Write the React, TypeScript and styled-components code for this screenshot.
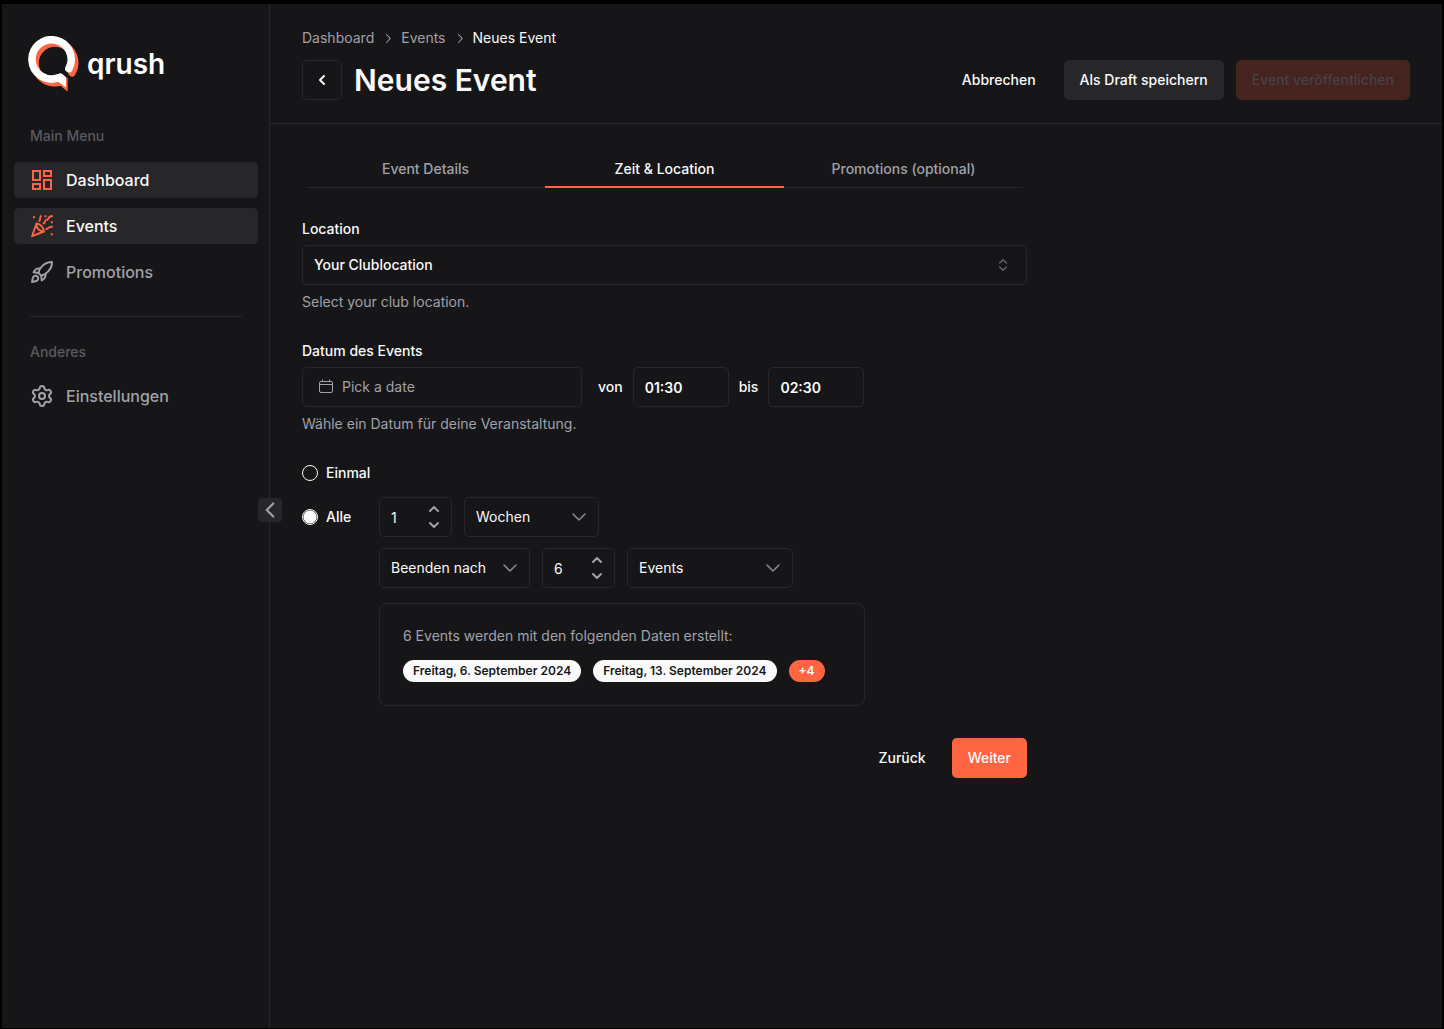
import React from "react";
import styled, { createGlobalStyle } from "styled-components";
import { Settings, ChevronLeft, ChevronDown, ChevronUp, ChevronsUpDown } from "lucide-react";
import { RxChevronRight } from "react-icons/rx";

const c = {
  bg: "#161618",
  raised: "#27272a",
  line: "#27272a",
  text: "#fafafa",
  muted: "#a1a1aa",
  faint: "#5a5a61",
  accent: "#ff6542",
};

const Global = createGlobalStyle`
  *, *::before, *::after { box-sizing: border-box; }
  body { margin: 0; background: #000; color: ${c.text}; font: 400 14px/20px Inter, "Liberation Sans", sans-serif; }
  button, input, select { font: inherit; color: inherit; margin: 0; }
  button { cursor: pointer; }
  a { color: inherit; text-decoration: none; }
  svg { flex: none; display: block; }
`;

const Frame = styled.div`
  display: grid;
  grid-template-columns: 268px 1fr;
  min-height: 100vh;
  border: solid #000;
  border-width: 4px 2px 1px;
  background: ${c.bg};
`;

const Sidebar = styled.aside`
  position: relative;
  border-right: 1px solid ${c.line};
  padding: 32px 11px 0 12px;
`;

const Brand = styled.a`
  display: flex;
  align-items: center;
  gap: 8px;
  height: 56px;
  margin-bottom: 4px;
  padding-left: 14px;
  font-size: 28px;
  line-height: 36px;
  font-weight: 600;
  color: #fff;
`;

const MenuTitle = styled.h2`
  margin: 0;
  padding: 30px 16px 16px;
  font-size: 14px;
  line-height: 20px;
  font-weight: 500;
  color: ${c.faint};
`;

const Menu = styled.nav`
  display: grid;
  gap: 10px;
`;

const MenuLink = styled.a<{ $active?: boolean }>`
  display: flex;
  align-items: center;
  gap: 12px;
  height: 36px;
  padding: 0 16px;
  border-radius: 5px;
  font-size: 16px;
  line-height: 24px;
  font-weight: 500;
  color: ${(p) => (p.$active ? c.text : c.muted)};
  background: ${(p) => (p.$active ? c.raised : "transparent")};
  svg { color: ${(p) => (p.$active ? c.accent : c.muted)}; }
`;

const Divider = styled.hr`
  margin: 26px 16px -5px;
  border: 0;
  border-top: 1px solid ${c.line};
`;

const Collapse = styled.button`
  position: absolute;
  right: -13px;
  top: 494px;
  display: flex;
  align-items: center;
  justify-content: center;
  width: 24px;
  height: 24px;
  padding: 0;
  border: 0;
  border-radius: 4px;
  background: ${c.raised};
  color: ${c.muted};
`;

const Header = styled.header`
  display: flex;
  align-items: flex-end;
  justify-content: space-between;
  height: 120px;
  padding: 0 32px 23px;
  border-bottom: 1px solid ${c.line};
`;

const Crumbs = styled.nav`
  display: flex;
  align-items: center;
  gap: 6px;
  margin-bottom: 12px;
  color: ${c.muted};
  [aria-current] { color: ${c.text}; }
`;

const TitleRow = styled.div`
  display: flex;
  align-items: center;
  gap: 12px;
`;

const Title = styled.h1`
  margin: 0;
  font-size: 30px;
  line-height: 36px;
  font-weight: 600;
`;

const Actions = styled.div<{ $end?: boolean }>`
  display: flex;
  justify-content: flex-end;
  gap: ${(p) => (p.$end ? "10px" : "12px")};
  margin-top: ${(p) => (p.$end ? "32px" : "0")};
`;

const Button = styled.button<{ $kind?: "ghost" | "raised" | "accent" }>`
  height: 40px;
  padding: 0 16px;
  border: 0;
  border-radius: 5px;
  font-weight: 500;
  white-space: nowrap;
  background: ${(p) => (p.$kind === "accent" ? c.accent : p.$kind === "raised" ? c.raised : "transparent")};
  &:disabled { background: #45241f; color: #474143; }
`;

const IconButton = styled.button`
  display: grid;
  place-items: center;
  width: 40px;
  height: 40px;
  padding: 0;
  border: 1px solid ${c.line};
  border-radius: 5px;
  background: transparent;
`;

const Form = styled.form`
  max-width: 789px;
  padding: 26px 32px;
`;

const Tabs = styled.div`
  display: grid;
  grid-template-columns: repeat(3, 1fr);
  margin: 0 4px 31px;
`;

const Tab = styled.button<{ $active?: boolean }>`
  height: 38px;
  padding: ${(p) => (p.$active ? "1px 0 0" : "0")};
  border: 0;
  border-bottom: ${(p) => (p.$active ? `2px solid ${c.accent}` : `1px solid ${c.line}`)};
  background: transparent;
  font-weight: 500;
  color: ${(p) => (p.$active ? c.text : c.muted)};
`;

const Field = styled.div`
  margin-bottom: 29px;
`;

const Label = styled.label`
  display: block;
  margin-bottom: 6px;
  font-weight: 500;
`;

const Hint = styled.p`
  margin: 7px 0 0;
  color: ${c.muted};
`;

const Row = styled.div<{ $gap: number }>`
  display: flex;
  align-items: center;
  gap: ${(p) => p.$gap}px;
`;

const Control = styled.div<{ $w?: number; $wide?: boolean }>`
  display: grid;
  grid-template-columns: minmax(0, 1fr);
  align-items: center;
  width: ${(p) => (p.$w ? `${p.$w}px` : "100%")};
  height: 40px;
  border: 1px solid ${c.line};
  border-radius: 5px;
  > * { grid-area: 1 / 1; }
  > svg {
    justify-self: end;
    margin-right: ${(p) => (p.$wide ? "15px" : "7px")};
    pointer-events: none;
    color: ${(p) => (p.$wide ? "#68686d" : "#8b8b91")};
  }
`;

const Select = styled.select<{ $strong?: boolean }>`
  appearance: none;
  width: 100%;
  height: 38px;
  padding: 0 11px;
  border: 0;
  background: transparent;
  font-weight: ${(p) => (p.$strong ? 500 : 400)};
`;

const Input = styled.input<{ $strong?: boolean }>`
  appearance: textfield;
  width: 100%;
  height: 38px;
  padding: 0 11px;
  border: 0;
  background: transparent;
  font-weight: ${(p) => (p.$strong ? 600 : 400)};
  &::-webkit-inner-spin-button { display: none; }
`;

const DateButton = styled.button`
  display: flex;
  align-items: center;
  gap: 8px;
  width: 280px;
  height: 40px;
  padding: 0 15px;
  border: 1px solid ${c.line};
  border-radius: 5px;
  background: transparent;
  color: ${c.muted};
`;

const Small = styled.label`
  font-weight: 500;
`;

const TimeRow = styled(Row)`
  ${DateButton} { margin-right: 6px; }
`;

const Steps = styled.div`
  display: grid;
  justify-self: end;
  margin-right: 9px;
  button {
    display: grid;
    place-items: center;
    width: 16px;
    height: 16px;
    padding: 0;
    border: 0;
    background: transparent;
    color: ${c.muted};
  }
`;

const Repeat = styled.div`
  display: grid;
  grid-template-columns: 65px 1fr;
  column-gap: 12px;
  row-gap: 11px;
`;

const RadioRow = styled.label`
  display: flex;
  align-items: center;
  gap: 8px;
  font-weight: 500;
`;

const Once = styled(RadioRow)`
  grid-column: 1 / -1;
  height: 20px;
  margin-bottom: 3px;
`;

const Radio = styled.input`
  appearance: none;
  flex: none;
  width: 16px;
  height: 16px;
  margin: 0;
  border: 1px solid ${c.text};
  border-radius: 50%;
  &:checked { background: radial-gradient(circle, ${c.text} 6px, transparent 7px); }
`;

const Second = styled.div`
  grid-column: 2;
`;

const Summary = styled.section`
  max-width: 486px;
  margin-top: 15px;
  padding: 22px 23px 23px;
  border: 1px solid ${c.line};
  border-radius: 8px;
  p { margin: 0 0 14px; color: ${c.muted}; }
`;

const Pill = styled.span<{ $accent?: boolean }>`
  padding: 3px 10px;
  border-radius: 11px;
  font-size: 12px;
  line-height: 16px;
  font-weight: 600;
  white-space: nowrap;
  color: ${(p) => (p.$accent ? c.text : "#18181b")};
  background: ${(p) => (p.$accent ? c.accent : c.text)};
`;

const Logo = () => (
  <svg width="51" height="56" viewBox="0 0 51 56" fill="none" aria-hidden="true">
    <path d="M44 36.800A19.800 19.800 0 1 0 33 45.700" stroke={c.accent} strokeWidth="7.600" strokeLinecap="round" />
    <path d="M33 42 39.700 41.500V54.500Q39.700 55.600 38.800 54.900L30 47.500z" fill={c.accent} />
    <path d="M40.900 32.600A19.600 19.600 0 1 0 30 41.900" stroke="#fff" strokeWidth="7.600" strokeLinecap="round" />
    <path d="M29 38.500 32 37.300Q33 37 34 37.800L38 41V50.500Q38 51.500 37 50.800L30 45.500z" fill="#fff" />
  </svg>
);

const DashboardIcon = () => (
  <svg width="24" height="24" viewBox="0 0 24 24" fill="none" stroke="currentColor" strokeWidth="2" aria-hidden="true">
    <path d="M3 3h7v9H3zM14 3h7v5h-7zM14 12h7v9h-7zM3 16h7v5H3z" />
  </svg>
);

const PartyIcon = () => (
  <svg width="24" height="24" viewBox="0 0 24 24" fill="none" stroke="currentColor" strokeWidth="1.900" strokeLinejoin="round" aria-hidden="true">
    <path d="M6.500 9.500 2 22.200 14 17.500C13.500 13.500 10.500 10 6.500 9.500ZM6.500 9.700C5.800 13.500 9 17.300 13.500 17.500" />
    <path d="M8.500 7.200C11.800 6.500 8.500 3.800 11.500 1.500M12.700 9.500C16.500 9.500 13.300 6.400 16.800 5.900C19.500 5.500 17 2.200 22.800 2M15.500 15.200C18.800 15.500 17.500 11.900 22.800 12.800" />
    <path d="M3 3.200h2M14.500 2.200h2M20.800 8.200h2M20.800 20.300h2" strokeWidth="2" />
  </svg>
);

const RocketIcon = () => (
  <svg width="24" height="24" viewBox="0 0 24 24" fill="none" stroke="currentColor" strokeWidth="1.900" strokeLinejoin="round" strokeLinecap="round" aria-hidden="true">
    <path d="M22 2C16.500 1.800 12.700 4.500 9.500 9.400L8.500 13l2.700 2.700L14.600 14.500C19.500 11.200 22.200 7.500 22 2Z" />
    <path d="M10 8.500C6.500 7.800 5 9.500 3.500 12.300L8.500 13M15.500 14C16.200 17.500 14.500 19 11.700 20.500L11.200 15.700" />
    <path d="M7.500 16.500C5.500 14.700 3.200 16.200 2.700 18.500L2 22l3.500-.7C7.800 20.800 9.300 18.500 7.500 16.500Z" />
  </svg>
);

const CalendarIcon = () => (
  <svg width="16" height="16" viewBox="0 0 16 16" fill="none" stroke="currentColor" aria-hidden="true">
    <rect x="1.500" y="2.500" width="13" height="11" rx="1.500" />
    <path d="M1.500 5.500h13M4.500 0.500v2M11.500 0.500v2" />
  </svg>
);

function NumberBox({ id, label, value }: { id: string; label: string; value: number }) {
  const [n, setN] = React.useState(value);
  return (
    <Control $w={73}>
      <Input id={id} aria-label={label} type="number" value={n} onChange={(e) => setN(Number(e.target.value))} />
      <Steps>
        <button type="button" aria-label="Erhöhen" onClick={() => setN(n + 1)}><ChevronUp size={16} strokeWidth={3} /></button>
        <button type="button" aria-label="Verringern" onClick={() => setN(Math.max(1, n - 1))}><ChevronDown size={16} strokeWidth={3} /></button>
      </Steps>
    </Control>
  );
}

function Choice({ label, value, width }: { label: string; value: string; width: number }) {
  return (
    <Control $w={width}>
      <Select aria-label={label}><option>{value}</option></Select>
      <ChevronDown size={24} strokeWidth={1.500} />
    </Control>
  );
}

export default function App() {
  return (
    <>
      <Global />
      <Frame>
        <Sidebar>
          <Brand href="#"><Logo />qrush</Brand>
          <MenuTitle>Main Menu</MenuTitle>
          <Menu>
            <MenuLink href="#" $active><DashboardIcon />Dashboard</MenuLink>
            <MenuLink href="#" $active><PartyIcon />Events</MenuLink>
            <MenuLink href="#"><RocketIcon />Promotions</MenuLink>
          </Menu>
          <Divider />
          <MenuTitle>Anderes</MenuTitle>
          <Menu>
            <MenuLink href="#"><Settings size={24} strokeWidth={2} />Einstellungen</MenuLink>
          </Menu>
          <Collapse aria-label="Menü einklappen"><ChevronLeft size={26} strokeWidth={2} /></Collapse>
        </Sidebar>
        <main>
          <Header>
            <div>
              <Crumbs aria-label="Breadcrumb">
                <a href="#">Dashboard</a>
                <RxChevronRight size={15} />
                <a href="#">Events</a>
                <RxChevronRight size={15} />
                <span aria-current="page">Neues Event</span>
              </Crumbs>
              <TitleRow>
                <IconButton aria-label="Zurück"><ChevronLeft size={16} strokeWidth={3} /></IconButton>
                <Title>Neues Event</Title>
              </TitleRow>
            </div>
            <Actions>
              <Button>Abbrechen</Button>
              <Button $kind="raised">Als Draft speichern</Button>
              <Button $kind="accent" disabled>Event veröffentlichen</Button>
            </Actions>
          </Header>
          <Form onSubmit={(e) => e.preventDefault()}>
            <Tabs role="tablist">
              <Tab type="button" role="tab">Event Details</Tab>
              <Tab type="button" role="tab" aria-selected $active>Zeit &amp; Location</Tab>
              <Tab type="button" role="tab">Promotions (optional)</Tab>
            </Tabs>
            <Field>
              <Label htmlFor="location">Location</Label>
              <Control $wide>
                <Select id="location" $strong><option>Your Clublocation</option></Select>
                <ChevronsUpDown size={16} strokeWidth={2} />
              </Control>
              <Hint>Select your club location.</Hint>
            </Field>
            <Field>
              <Label htmlFor="date">Datum des Events</Label>
              <TimeRow $gap={10}>
                <DateButton id="date" type="button"><CalendarIcon />Pick a date</DateButton>
                <Small htmlFor="from">von</Small>
                <Control $w={96}><Input id="from" $strong defaultValue="01:30" /></Control>
                <Small htmlFor="to">bis</Small>
                <Control $w={96}><Input id="to" $strong defaultValue="02:30" /></Control>
              </TimeRow>
              <Hint>Wähle ein Datum für deine Veranstaltung.</Hint>
            </Field>
            <Repeat>
              <Once><Radio type="radio" name="repeat" />Einmal</Once>
              <RadioRow><Radio type="radio" name="repeat" defaultChecked />Alle</RadioRow>
              <Row $gap={12}>
                <NumberBox id="every" label="Intervall" value={1} />
                <Choice label="Einheit" value="Wochen" width={135} />
              </Row>
              <Second>
                <Row $gap={12}>
                  <Choice label="Ende" value="Beenden nach" width={151} />
                  <NumberBox id="count" label="Anzahl" value={6} />
                  <Choice label="Endeinheit" value="Events" width={166} />
                </Row>
                <Summary>
                  <p>6 Events werden mit den folgenden Daten erstellt:</p>
                  <Row $gap={12}>
                    <Pill>Freitag, 6. September 2024</Pill>
                    <Pill>Freitag, 13. September 2024</Pill>
                    <Pill $accent>+4</Pill>
                  </Row>
                </Summary>
              </Second>
            </Repeat>
            <Actions $end>
              <Button type="button">Zurück</Button>
              <Button type="submit" $kind="accent">Weiter</Button>
            </Actions>
          </Form>
        </main>
      </Frame>
    </>
  );
}
